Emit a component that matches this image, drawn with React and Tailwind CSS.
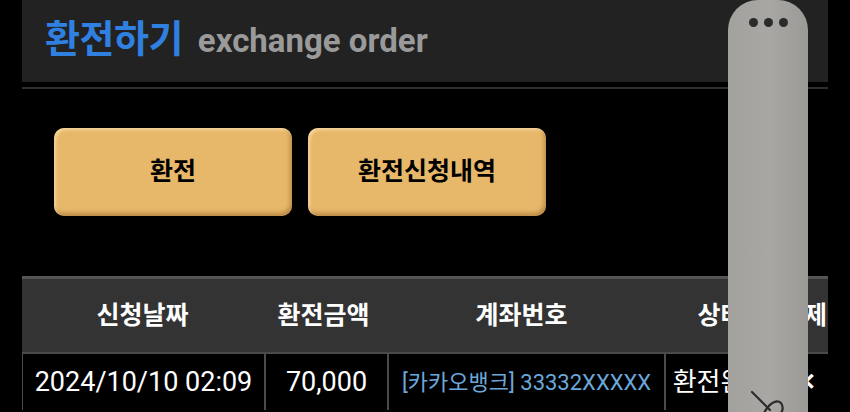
import React from "react";

const FONT = { fontFamily: 'Roboto, "Noto Sans CJK KR", sans-serif' };

const COLS = "grid grid-cols-[241px_121px_275px_121px_48px]";

export default function App() {
  return (
    <div className="relative w-full h-[412px] bg-black overflow-hidden" style={FONT}>
      <div className="w-[806px] ml-[22px] flex flex-col overflow-hidden">
        {/* title bar */}
        <header className="h-[82px] bg-[#222222] flex items-center pl-[23px] pb-[4px] gap-[15px]">
          <h1 className="text-[38px] font-bold text-[#2f80e0] tracking-[-0.5px] leading-none">환전하기</h1>
          <span className="text-[33px] font-bold text-[#9a9a9a] leading-none mt-[2px]">exchange order</span>
        </header>
        <div className="h-[2px] bg-[#2e2e2e] mt-[5px]" />

        {/* action buttons */}
        <div className="flex gap-4 pl-8 mt-[39px]">
          <button
            type="button"
            className="w-[238px] h-[88px] rounded-[10px] bg-[#e8b86a] text-black text-[25px] font-bold shadow-[inset_2px_2px_3px_rgba(255,235,190,0.6),inset_-2px_-3px_4px_rgba(150,100,40,0.55)]"
          >
            환전
          </button>
          <button
            type="button"
            className="w-[238px] h-[88px] rounded-[10px] bg-[#e8b86a] text-black text-[25px] font-bold shadow-[inset_2px_2px_3px_rgba(255,235,190,0.6),inset_-2px_-3px_4px_rgba(150,100,40,0.55)]"
          >
            환전신청내역
          </button>
        </div>

        {/* history table */}
        <div className="mt-[60px] w-[840px]">
          <div className={`${COLS} h-[76px] bg-[#333333] border-t-[3px] border-[#555555] text-white text-[25px] font-bold`}>
            <div className="flex items-center justify-center">신청날짜</div>
            <div className="flex items-center justify-center">환전금액</div>
            <div className="flex items-center justify-center">계좌번호</div>
            <div className="flex items-center justify-center pl-[2px]">상태</div>
            <div className="flex items-center justify-center">삭제</div>
          </div>
          <div className={`${COLS} h-[58px] bg-[#4a4a4a] gap-[2px] pl-[1px] pt-[2px] text-white text-[27px]`}>
            <div className="bg-black flex items-center justify-center">2024/10/10 02:09</div>
            <div className="bg-black flex items-center justify-center">70,000</div>
            <div className="bg-black flex items-center justify-center text-[22px] text-[#6aa8dc]">[카카오뱅크] 33332XXXXX</div>
            <div className="bg-black flex items-center justify-center pr-[12px] text-[26px]">환전완료</div>
            <div className="bg-black flex items-center justify-center pr-[14px] font-bold text-[24px]">✕</div>
          </div>
        </div>
      </div>

      {/* floating side handle */}
      <div className="absolute left-[728px] top-0 w-[80px] h-[412px] rounded-t-[30px] bg-gradient-to-r from-[#a3a19d] via-[#a9a7a3] to-[#9c9a96]">
        <div className="flex justify-center gap-[6px] mt-[18px]">
          <span className="w-[9px] h-[9px] rounded-full bg-[#2b2b2b]" />
          <span className="w-[9px] h-[9px] rounded-full bg-[#2b2b2b]" />
          <span className="w-[9px] h-[9px] rounded-full bg-[#2b2b2b]" />
        </div>
        <svg className="absolute left-[20px] top-[382px]" width="40" height="30" viewBox="0 0 40 30" fill="none">
          <path d="M4 10 L22 28" stroke="#2b2b2b" strokeWidth="2.2" strokeLinecap="round" />
          <path d="M16 31 C20 23 28 16 33 21 C35 24 35 28 33 31" stroke="#2b2b2b" strokeWidth="2.2" strokeLinecap="round" />
        </svg>
      </div>
    </div>
  );
}
